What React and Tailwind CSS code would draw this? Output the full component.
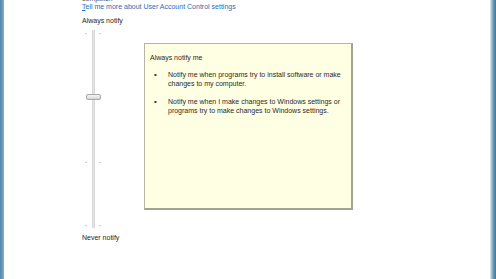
import React from 'react';

const font = { fontFamily: '"Liberation Sans", "Open Sans", Arial, sans-serif' };

function Ticks({ top }) {
  return (
    <div className="absolute left-0 w-[22px] flex justify-between px-[3px]" style={{ top }}>
      <div className="w-[2px] h-px bg-[#cfcfcf]" />
      <div className="w-[2px] h-px bg-[#cfcfcf]" />
    </div>
  );
}

function Slider() {
  return (
    <div className="relative w-[22px] h-[198px] flex justify-center">
      <div className="w-[3px] h-full bg-[#e4e4e4] border-x border-[#d8d8d8]" />
      <Ticks top={3} />
      <Ticks top={132} />
      <Ticks top={195} />
      {/* thumb */}
      <div className="absolute left-[4px] top-[64px] w-[15px] h-[6px] rounded-[2px] border border-[#a8a8a8] bg-gradient-to-b from-[#f6f6f6] to-[#d6d6d6]" />
    </div>
  );
}

export default function App() {
  return (
    <div className="w-[496px] h-[279px] flex bg-white overflow-hidden text-[#1e1e1e]" style={font}>
      <div className="w-[4px] h-full bg-gradient-to-r from-[#4f86a8] to-[#7fb0c8]" />
      <div className="flex-1 flex flex-col pl-[78px] text-[7px] leading-[9px]">
        <div className="-mt-[6px] text-[#555]">computer.</div>
        <div className="text-[#2b6cb5] -mt-[1px]">
          <span className="underline">T</span>ell me more about User Account Control settings
        </div>
        <div className="mt-[5px]">Always notify</div>
        <div className="flex mt-[5px]">
          <Slider />
          <div className="ml-[40px] mt-[13px] w-[209px] h-[167px] bg-[#ffffe3] border border-[#b5b5a5] border-r-2 border-b-2 border-r-[#a3a393] border-b-[#a3a393] px-[5px] pt-[9px] text-[7px] leading-[9px] text-[#2a2a2a]">
            <div>Always notify me</div>
            <ul className="mt-[8px] flex flex-col gap-[9px]">
              <li className="flex">
                <span className="w-[18px] pl-[4px] text-[8px] leading-[9px]">•</span>
                <span className="flex-1">Notify me when programs try to install software or make changes to my computer.</span>
              </li>
              <li className="flex">
                <span className="w-[18px] pl-[4px] text-[8px] leading-[9px]">•</span>
                <span className="flex-1">Notify me when I make changes to Windows settings or programs try to make changes to Windows settings.</span>
              </li>
            </ul>
          </div>
        </div>
        <div className="mt-[5px]">Never notify</div>
      </div>
      <div className="w-[6px] h-full bg-gradient-to-r from-[#e9eef2] via-[#6f9fbd] to-[#3f7599]" />
    </div>
  );
}
